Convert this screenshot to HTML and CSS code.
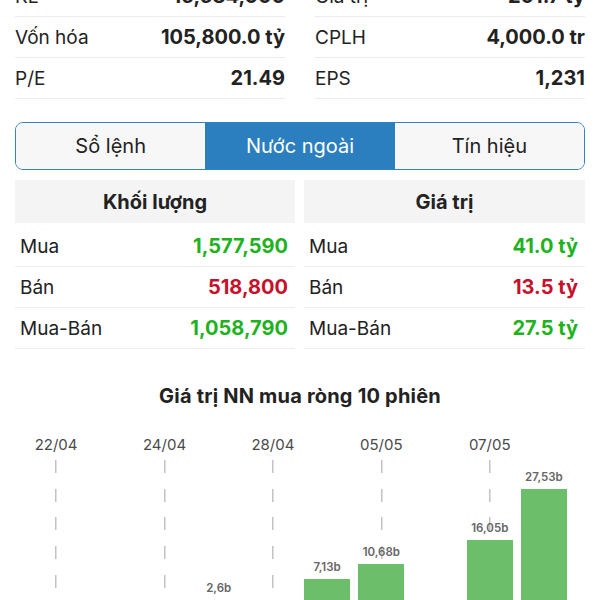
FILE: index.html
```html
<!DOCTYPE html>
<html lang="vi">

<head>
    <meta charset="UTF-8">
    <meta name="viewport" content="width=device-width, initial-scale=1.0">
    <title>Nước ngoài</title>
    <link rel="stylesheet" href="styles.css">
</head>

<body>
    <div class="screen">
        <section class="stats">
            <div class="stat-col">
                <div class="stat-row"><span>KL</span><span class="value">16,684,000</span></div>
                <div class="stat-row"><span>Vốn hóa</span><span class="value">105,800.0 tỷ</span></div>
                <div class="stat-row"><span>P/E</span><span class="value">21.49</span></div>
            </div>
            <div class="stat-col">
                <div class="stat-row"><span>Giá trị</span><span class="value">201.7 tỷ</span></div>
                <div class="stat-row"><span>CPLH</span><span class="value">4,000.0 tr</span></div>
                <div class="stat-row"><span>EPS</span><span class="value">1,231</span></div>
            </div>
        </section>

        <nav class="tabs">
            <button class="tab">Sổ lệnh</button>
            <button class="tab active">Nước ngoài</button>
            <button class="tab">Tín hiệu</button>
        </nav>

        <section class="foreign">
            <div class="panel">
                <div class="panel-head">Khối lượng</div>
                <div class="panel-row"><span>Mua</span><span class="num up">1,577,590</span></div>
                <div class="panel-row"><span>Bán</span><span class="num down">518,800</span></div>
                <div class="panel-row"><span>Mua-Bán</span><span class="num up">1,058,790</span></div>
            </div>
            <div class="panel">
                <div class="panel-head">Giá trị</div>
                <div class="panel-row"><span>Mua</span><span class="num up">41.0 tỷ</span></div>
                <div class="panel-row"><span>Bán</span><span class="num down">13.5 tỷ</span></div>
                <div class="panel-row"><span>Mua-Bán</span><span class="num up">27.5 tỷ</span></div>
            </div>
        </section>

        <section class="chart">
            <h3 class="chart-title">Giá trị NN mua ròng 10 phiên</h3>
            <div class="chart-body">
                <div class="slot">
                    <div class="date">22/04</div>
                    <div class="plot tick"></div>
                </div>
                <div class="slot">
                    <div class="date"></div>
                    <div class="plot"></div>
                </div>
                <div class="slot">
                    <div class="date">24/04</div>
                    <div class="plot tick"></div>
                </div>
                <div class="slot">
                    <div class="date"></div>
                    <div class="plot">
                        <span class="bar-label">2,6b</span>
                        <div class="bar" style="height: 11.5px"></div>
                    </div>
                </div>
                <div class="slot">
                    <div class="date">28/04</div>
                    <div class="plot tick"></div>
                </div>
                <div class="slot">
                    <div class="date"></div>
                    <div class="plot">
                        <span class="bar-label">7,13b</span>
                        <div class="bar" style="height: 31.7px"></div>
                    </div>
                </div>
                <div class="slot">
                    <div class="date">05/05</div>
                    <div class="plot tick">
                        <span class="bar-label">10,68b</span>
                        <div class="bar" style="height: 47.4px"></div>
                    </div>
                </div>
                <div class="slot">
                    <div class="date"></div>
                    <div class="plot"></div>
                </div>
                <div class="slot">
                    <div class="date">07/05</div>
                    <div class="plot tick">
                        <span class="bar-label">16,05b</span>
                        <div class="bar" style="height: 71.3px"></div>
                    </div>
                </div>
                <div class="slot">
                    <div class="date"></div>
                    <div class="plot">
                        <span class="bar-label">27,53b</span>
                        <div class="bar" style="height: 122.2px"></div>
                    </div>
                </div>
            </div>
        </section>
    </div>
</body>

</html>
```

FILE: styles.css
```css
body {
    margin: 0;
    background: #fff;
    color: #222;
    font-family: Inter, "Liberation Sans", sans-serif;
}

.screen {
    width: 600px;
    height: 600px;
    overflow: hidden;
}

/* thông tin cổ phiếu */
.stats {
    display: grid;
    grid-template-columns: 1fr 1fr;
    column-gap: 30px;
    padding: 0 15px;
    margin-top: -24px;
}

.stat-row {
    display: flex;
    justify-content: space-between;
    align-items: center;
    height: 40px;
    border-bottom: 1px solid #ececec;
    font-size: 19px;
}

.value {
    font-size: 20px;
    font-weight: 700;
}

/* tabs */
.tabs {
    display: flex;
    margin: 23px 15px 0;
    height: 48px;
    box-sizing: border-box;
    border: 1.5px solid #3483c3;
    border-radius: 8px;
    overflow: hidden;
}

.tab {
    flex: 1;
    border: none;
    background: #f7f7f7;
    color: #222;
    font-family: inherit;
    font-size: 20px;
    padding: 0;
}

.tab.active {
    background: #2b7fbf;
    color: #fff;
}

/* khối nước ngoài */
.foreign {
    display: grid;
    grid-template-columns: 280px 281px;
    column-gap: 9px;
    padding: 0 15px;
    margin-top: 10px;
}

.panel-head {
    height: 43px;
    display: flex;
    align-items: center;
    justify-content: center;
    background: #f4f4f4;
    font-size: 20px;
    font-weight: 700;
    margin-bottom: 3px;
}

.panel-row {
    display: flex;
    justify-content: space-between;
    align-items: center;
    height: 40px;
    padding: 0 7px 0 5px;
    border-bottom: 1px solid #eeeeee;
    font-size: 19px;
}

.num {
    font-size: 20px;
    font-weight: 700;
}

.up {
    color: #1eb31e;
}

.down {
    color: #c9102a;
}

/* biểu đồ */
.chart-title {
    margin: 35px 0 0;
    text-align: center;
    font-size: 20px;
    line-height: 24px;
    letter-spacing: 0.2px;
    font-weight: 700;
    color: #222;
}

.chart-body {
    display: flex;
    padding: 0 29px;
    margin-top: 28px;
}

.slot {
    flex: 1;
    display: flex;
    flex-direction: column;
    align-items: center;
}

.date {
    height: 18px;
    line-height: 18px;
    font-size: 15px;
    color: #4a4a4a;
}

.plot {
    width: 100%;
    height: 151px;
    margin-top: 6px;
    display: flex;
    flex-direction: column;
    align-items: center;
    justify-content: flex-end;
}

.plot.tick {
    background: repeating-linear-gradient(to bottom, #c2c2c2 0 13px, transparent 13px 28.7px) center top / 1.5px 100% no-repeat;
}

.bar-label {
    font-size: 11.5px;
    line-height: 13px;
    font-weight: 600;
    color: #666;
    margin-bottom: 5px;
}

.bar {
    width: 46px;
    background: #6dbe6a;
}
```
